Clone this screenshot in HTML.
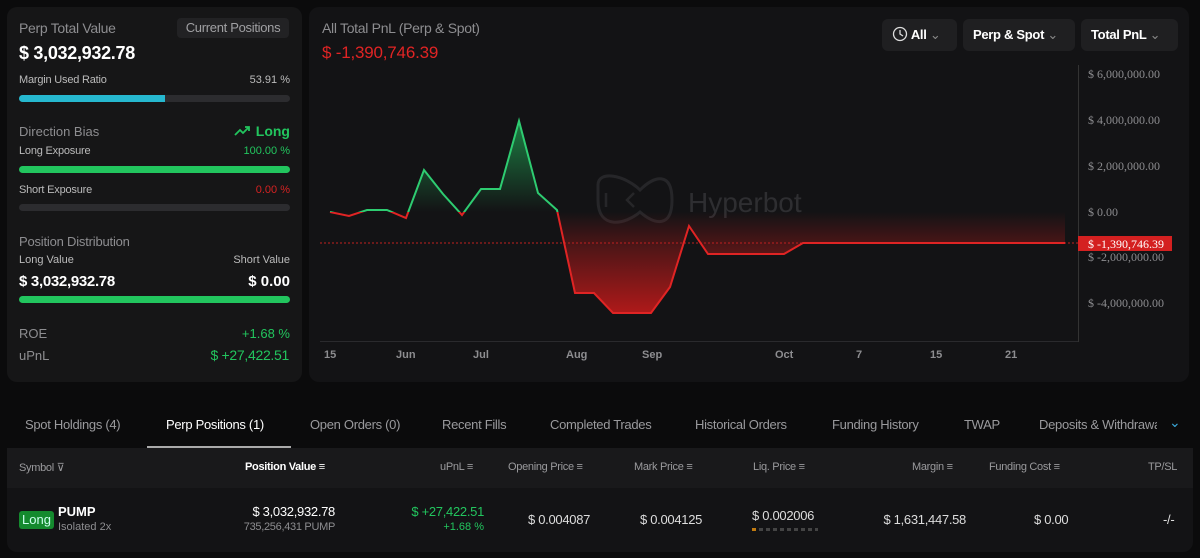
<!DOCTYPE html>
<html><head><meta charset="utf-8"><style>
*{box-sizing:border-box;margin:0;padding:0}
body{width:1200px;height:558px;background:#0b0b0c;font-family:"Liberation Sans",sans-serif;color:#fff;position:relative;overflow:hidden}
.a{position:absolute;white-space:nowrap}
.r{position:absolute;white-space:nowrap;text-align:right}
.card{position:absolute;background:#161617;border-radius:10px}
.g{color:#8d8d90}
.gr{color:#22c55e}
.bar{position:absolute;height:7px;border-radius:4px;background:#2c2c2f;left:19px;width:271px}
.btn{position:absolute;top:19px;height:32px;background:#1f1f21;border-radius:6px;font-weight:bold;font-size:13px;line-height:32px;padding-left:10px;white-space:nowrap;letter-spacing:-.3px}
.tab{position:absolute;top:417px;font-size:13px;color:#9a9a9d;white-space:nowrap;letter-spacing:-.3px}
.th{position:absolute;top:461px;font-size:11px;color:#9a9a9d;white-space:nowrap;letter-spacing:-.3px}
.td{position:absolute;font-size:13px;color:#ddd;white-space:nowrap;letter-spacing:-.3px}
</style></head><body>
<div class="card" style="left:7px;top:7px;width:295px;height:375px"></div>
<div class="a g" style="left:19px;top:20px;font-size:14px;letter-spacing:-.3px">Perp Total Value</div>
<div class="a" style="left:177px;top:18px;width:112px;height:20px;background:#222224;border-radius:4px;color:#a0a0a3;font-size:13px;text-align:center;line-height:20px;letter-spacing:-.3px">Current Positions</div>
<div class="a" style="left:19px;top:43px;font-size:18px;font-weight:bold;letter-spacing:-.3px">$ 3,032,932.78</div>
<div class="a" style="left:19px;top:74px;font-size:11px;color:#bbb;letter-spacing:-.2px">Margin Used Ratio</div>
<div class="r" style="right:910px;top:74px;font-size:11px;color:#bbb">53.91 %</div>
<div class="bar" style="top:95px"></div><div class="bar" style="top:95px;width:146px;background:#26b8cf;border-radius:4px 0 0 4px"></div>
<div class="a g" style="left:19px;top:124px;font-size:13px">Direction Bias</div>
<div class="r gr" style="right:910px;top:123px;font-size:14px;font-weight:bold"><svg width="18" height="12" viewBox="0 0 18 12" style="vertical-align:-1px"><path d="M1 10L6 5L9 8L15 2M11 2H15V6" fill="none" stroke="#22c55e" stroke-width="1.8"/></svg> Long</div>
<div class="a" style="left:19px;top:145px;font-size:11px;color:#bbb;letter-spacing:-.2px">Long Exposure</div>
<div class="r gr" style="right:910px;top:145px;font-size:11px">100.00 %</div>
<div class="bar" style="top:166px;background:#22c55e"></div>
<div class="a" style="left:19px;top:184px;font-size:11px;color:#bbb;letter-spacing:-.2px">Short Exposure</div>
<div class="r" style="right:910px;top:184px;font-size:11px;color:#d42222">0.00 %</div>
<div class="bar" style="top:204px"></div>
<div class="a g" style="left:19px;top:234px;font-size:13px;letter-spacing:-.2px">Position Distribution</div>
<div class="a" style="left:19px;top:254px;font-size:11px;color:#bbb">Long Value</div>
<div class="r" style="right:910px;top:254px;font-size:11px;color:#bbb">Short Value</div>
<div class="a" style="left:19px;top:273px;font-size:15px;font-weight:bold;letter-spacing:-.3px">$ 3,032,932.78</div>
<div class="r" style="right:910px;top:273px;font-size:15px;font-weight:bold">$ 0.00</div>
<div class="bar" style="top:296px;background:#22c55e"></div>
<div class="a g" style="left:19px;top:326px;font-size:13px">ROE</div>
<div class="r gr" style="right:910px;top:326px;font-size:13px">+1.68 %</div>
<div class="a g" style="left:19px;top:348px;font-size:13px">uPnL</div>
<div class="r gr" style="right:911px;top:347px;font-size:14px;letter-spacing:-.3px">$ +27,422.51</div>

<div class="card" style="left:309px;top:7px;width:880px;height:375px;background:#131315"></div>
<div class="a g" style="left:322px;top:20px;font-size:14px;letter-spacing:-.3px">All Total PnL (Perp &amp; Spot)</div>
<div class="a" style="left:322px;top:43px;font-size:17px;color:#e02424;letter-spacing:-.2px">$ -1,390,746.39</div>
<div class="btn" style="left:882px;width:75px"><svg width="16" height="16" viewBox="0 0 16 16" style="vertical-align:-3px"><circle cx="8" cy="8" r="6.5" fill="none" stroke="#ddd" stroke-width="1.3"/><path d="M8 4V8L11 10" fill="none" stroke="#ddd" stroke-width="1.3"/></svg> All <span style="color:#888;font-weight:normal">&#8964;</span></div>
<div class="btn" style="left:963px;width:112px">Perp &amp; Spot <span style="color:#888;font-weight:normal">&#8964;</span></div>
<div class="btn" style="left:1081px;width:97px">Total PnL <span style="color:#888;font-weight:normal">&#8964;</span></div>
<svg class="a" style="left:0;top:0" width="1200" height="400">
<defs>
<linearGradient id="gg" x1="0" y1="121" x2="0" y2="212" gradientUnits="userSpaceOnUse"><stop offset="0" stop-color="#1f9a4f" stop-opacity=".8"/><stop offset="1" stop-color="#1f9a4f" stop-opacity="0"/></linearGradient>
<linearGradient id="rg" x1="0" y1="212" x2="0" y2="313" gradientUnits="userSpaceOnUse"><stop offset="0" stop-color="#c01a1a" stop-opacity="0"/><stop offset=".35" stop-color="#c01a1a" stop-opacity=".35"/><stop offset="1" stop-color="#c01a1a" stop-opacity=".9"/></linearGradient>
<clipPath id="up"><rect x="300" y="0" width="800" height="212"/></clipPath>
<clipPath id="dn"><rect x="300" y="212" width="800" height="200"/></clipPath>
</defs>
<g opacity=".5" fill="none" stroke="#3a3a3d" stroke-width="3"><path d="M598 185C598 170 625 175 640 190C655 175 672 172 672 200C672 228 655 225 640 212C625 225 598 230 598 200Z"/><path d="M606 193V207M634 193L627 200L634 207" stroke-width="2.5"/></g>
<text x="688" y="212" font-size="28" fill="#2e2e31" font-family="Liberation Sans">Hyperbot</text>
<path d="M330 212L349 216L367 210L387 210L406 218L424 170L443 194L462 215L481 189L500 189L519 121L538 193L557 210L575 293L594 293L613 313L651 313L670 287L689 226L708 254L784 254L803 243L1065 243L1065 212L330 212Z" fill="url(#gg)" clip-path="url(#up)"/>
<path d="M330 212L349 216L367 210L387 210L406 218L424 170L443 194L462 215L481 189L500 189L519 121L538 193L557 210L575 293L594 293L613 313L651 313L670 287L689 226L708 254L784 254L803 243L1065 243L1065 212L330 212Z" fill="url(#rg)" clip-path="url(#dn)"/>
<line x1="320" y1="243" x2="1078" y2="243" stroke="#c02020" stroke-dasharray="2 2" stroke-width="1"/>
<path d="M330 212L349 216L367 210L387 210L406 218L424 170L443 194L462 215L481 189L500 189L519 121L538 193L557 210L575 293L594 293L613 313L651 313L670 287L689 226L708 254L784 254L803 243L1065 243" fill="none" stroke="#2ecc71" stroke-width="2" clip-path="url(#up)"/>
<path d="M330 212L349 216L367 210L387 210L406 218L424 170L443 194L462 215L481 189L500 189L519 121L538 193L557 210L575 293L594 293L613 313L651 313L670 287L689 226L708 254L784 254L803 243L1065 243" fill="none" stroke="#e02424" stroke-width="2" clip-path="url(#dn)"/>
<line x1="1078.5" y1="65" x2="1078.5" y2="342" stroke="#333"/>
<line x1="320" y1="341.5" x2="1078" y2="341.5" stroke="#2a2a2d"/>
<g font-family="Liberation Serif" font-size="12" fill="#8d8d90">
<text x="1088" y="78">$ 6,000,000.00</text><text x="1088" y="124">$ 4,000,000.00</text><text x="1088" y="170">$ 2,000,000.00</text><text x="1088" y="216">$ 0.00</text><text x="1088" y="261">$ -2,000,000.00</text><text x="1088" y="307">$ -4,000,000.00</text>
</g>
<rect x="1078" y="236" width="94" height="15" fill="#d42020"/>
<text x="1088" y="248" font-family="Liberation Serif" font-size="12" fill="#fff">$ -1,390,746.39</text>
<g font-size="11" fill="#8d8d90" font-weight="bold" font-family="Liberation Sans">
<text x="324" y="358">15</text><text x="396" y="358">Jun</text><text x="473" y="358">Jul</text><text x="566" y="358">Aug</text><text x="642" y="358">Sep</text><text x="775" y="358">Oct</text><text x="856" y="358">7</text><text x="930" y="358">15</text><text x="1005" y="358">21</text>
</g>
</svg>

<div class="tab" style="left:25px">Spot Holdings (4)</div>
<div class="tab" style="left:166px;color:#fff">Perp Positions (1)</div>
<div class="a" style="left:147px;top:446px;width:144px;height:2px;background:#aaa"></div>
<div class="tab" style="left:310px">Open Orders (0)</div>
<div class="tab" style="left:442px">Recent Fills</div>
<div class="tab" style="left:550px">Completed Trades</div>
<div class="tab" style="left:695px">Historical Orders</div>
<div class="tab" style="left:832px">Funding History</div>
<div class="tab" style="left:964px">TWAP</div>
<div class="tab" style="left:1039px;width:118px;overflow:hidden">Deposits &amp; Withdrawals</div>
<div class="a" style="left:1169px;top:414px;color:#3aa7d8;font-size:14px">&#8964;</div>
<div class="card" style="left:7px;top:448px;width:1186px;height:104px;background:#131315;border-radius:0 0 10px 10px"></div>
<div class="a" style="left:7px;top:448px;width:1186px;height:40px;background:#19191b"></div>
<div class="th" style="left:19px">Symbol ⊽</div>
<div class="th" style="left:245px;color:#fff;font-weight:bold">Position Value ≡</div>
<div class="th" style="left:440px">uPnL ≡</div>
<div class="th" style="left:508px">Opening Price ≡</div>
<div class="th" style="left:634px">Mark Price ≡</div>
<div class="th" style="left:753px">Liq. Price ≡</div>
<div class="th" style="left:912px">Margin ≡</div>
<div class="th" style="left:989px">Funding Cost ≡</div>
<div class="th" style="left:1148px">TP/SL</div>
<div class="a" style="left:19px;top:511px;width:35px;height:18px;background:#148a2e;border-radius:3px;font-size:13px;text-align:center;line-height:18px;color:#cfe">Long</div>
<div class="a" style="left:58px;top:504px;font-size:13px;font-weight:bold">PUMP</div>
<div class="a g" style="left:58px;top:521px;font-size:11px">Isolated 2x</div>
<div class="r" style="right:865px;top:504px;font-size:13px;color:#fff;letter-spacing:-.3px">$ 3,032,932.78</div>
<div class="r g" style="right:865px;top:521px;font-size:11px;letter-spacing:-.3px">735,256,431 PUMP</div>
<div class="r" style="right:716px;top:504px;font-size:13px;color:#22c55e;letter-spacing:-.3px">$ +27,422.51</div>
<div class="r gr" style="right:716px;top:521px;font-size:11px">+1.68 %</div>
<div class="td" style="left:528px;top:512px">$ 0.004087</div>
<div class="td" style="left:640px;top:512px">$ 0.004125</div>
<div class="td" style="left:752px;top:508px">$ 0.002006</div>
<div class="a" style="left:752px;top:528px;width:66px;height:3px;background:repeating-linear-gradient(90deg,#444 0 4px,transparent 4px 7px)"></div>
<div class="a" style="left:752px;top:528px;width:4px;height:3px;background:#c07a10"></div>
<div class="r" style="right:234px;top:512px;font-size:13px;color:#ddd;letter-spacing:-.3px">$ 1,631,447.58</div>
<div class="td" style="left:1034px;top:512px">$ 0.00</div>
<div class="td" style="left:1163px;top:512px">-/-</div>
</body></html>
